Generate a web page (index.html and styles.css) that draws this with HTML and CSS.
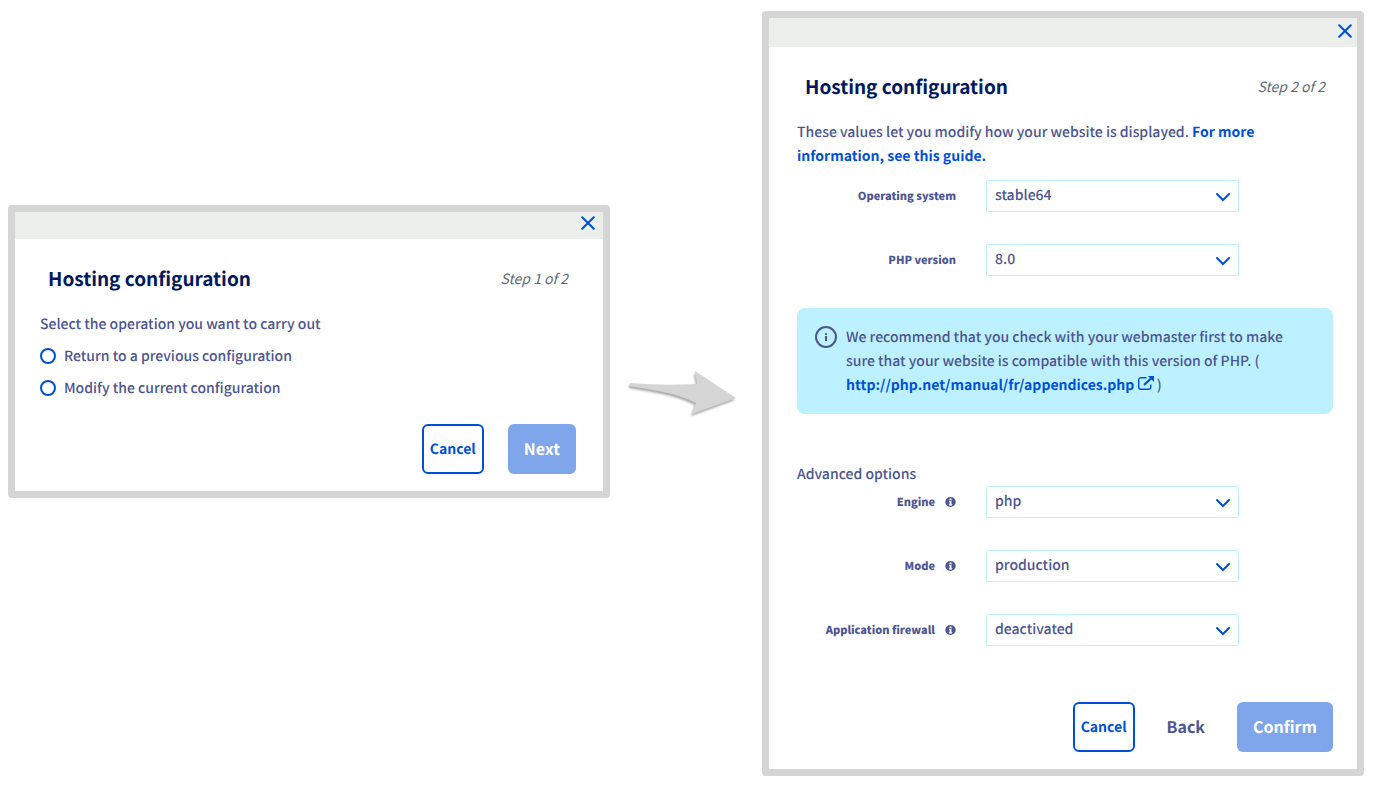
FILE: index.html
```html
<!DOCTYPE html>
<html lang="en">
  <head>
    <meta charset="utf-8">
    <meta name="viewport" content="width=device-width, initial-scale=1.0">
    <title>Hosting configuration</title>
    <link rel="stylesheet" href="styles.css">
  </head>

  <body>
    <main class="steps">
      <!-- Step 1 -->
      <section class="dialog dialog-first">
        <div class="dialog-bar">
          <button class="close" type="button" aria-label="Close">
            <svg width="14" height="14" viewBox="0 0 14 14"><path d="M1.2 1.2L12.8 12.8M12.8 1.2L1.2 12.8"/></svg>
          </button>
        </div>
        <form class="dialog-body">
          <div class="dialog-head">
            <h2>Hosting configuration</h2>
            <em>Step 1 of 2</em>
          </div>
          <p>Select the operation you want to carry out</p>
          <label class="radio"><input type="radio" name="operation" value="return">Return to a previous configuration</label>
          <label class="radio"><input type="radio" name="operation" value="modify">Modify the current configuration</label>
          <div class="actions">
            <button class="btn btn-outline" type="button">Cancel</button>
            <button class="btn btn-primary" type="button">Next</button>
          </div>
        </form>
      </section>

      <svg class="arrow" viewBox="0 0 110 48">
        <path d="M1 15C25 17 45 17 68 16L66 3L107 30L63 46L67 35C45 24 22 22 1 18Z"/>
      </svg>

      <!-- Step 2 -->
      <section class="dialog dialog-second">
        <div class="dialog-bar">
          <button class="close" type="button" aria-label="Close">
            <svg width="14" height="14" viewBox="0 0 14 14"><path d="M1.2 1.2L12.8 12.8M12.8 1.2L1.2 12.8"/></svg>
          </button>
        </div>
        <form class="dialog-body">
          <div class="dialog-head">
            <h2>Hosting configuration</h2>
            <em>Step 2 of 2</em>
          </div>
          <p class="intro">These values let you modify how your website is displayed. <a href="#">For more information, see this guide.</a></p>

          <div class="form-row">
            <label for="os">Operating system</label>
            <div class="select">
              <select id="os"><option>stable64</option></select>
              <svg width="16" height="10" viewBox="0 0 16 10"><path d="M2 2L8 8L14 2"/></svg>
            </div>
          </div>
          <div class="form-row">
            <label for="php">PHP version</label>
            <div class="select">
              <select id="php"><option>8.0</option></select>
              <svg width="16" height="10" viewBox="0 0 16 10"><path d="M2 2L8 8L14 2"/></svg>
            </div>
          </div>

          <div class="notice">
            <svg class="notice-icon" width="22" height="22" viewBox="0 0 22 22">
              <circle cx="11" cy="11" r="10"/>
              <path d="M10 7.2h2v1.8h-2zM10 10h2v5h-2z"/>
            </svg>
            <p>We recommend that you check with your webmaster first to make sure that your website is compatible with this version of PHP. ( <a href="http://php.net/manual/fr/appendices.php">http://php.net/manual/fr/appendices.php <svg class="external" width="16" height="14" viewBox="0 0 16 14"><path class="external-box" d="M8.5 1.7H3A2.3 2.3 0 0 0 .7 4V11A2.3 2.3 0 0 0 3 13.3H10.5A2.3 2.3 0 0 0 12.8 11V8.5"/><path class="external-line" d="M6 9L13.5 2"/><path d="M10 0H16V6Z"/></svg></a> )</p>
          </div>

          <p>Advanced options</p>
          <div class="form-row">
            <label for="engine">Engine
              <svg class="info" width="11" height="10" viewBox="0 0 11 10"><ellipse cx="5.5" cy="5" rx="5.2" ry="5"/><path d="M4.6 1.4h1.9v1.5H4.6zM3.9 3.8h2.6v3.5h.7v1.1H3.9V7.3h.7V4.9h-.7z"/></svg>
            </label>
            <div class="select">
              <select id="engine"><option>php</option></select>
              <svg width="16" height="10" viewBox="0 0 16 10"><path d="M2 2L8 8L14 2"/></svg>
            </div>
          </div>
          <div class="form-row">
            <label for="mode">Mode
              <svg class="info" width="11" height="10" viewBox="0 0 11 10"><ellipse cx="5.5" cy="5" rx="5.2" ry="5"/><path d="M4.6 1.4h1.9v1.5H4.6zM3.9 3.8h2.6v3.5h.7v1.1H3.9V7.3h.7V4.9h-.7z"/></svg>
            </label>
            <div class="select">
              <select id="mode"><option>production</option></select>
              <svg width="16" height="10" viewBox="0 0 16 10"><path d="M2 2L8 8L14 2"/></svg>
            </div>
          </div>
          <div class="form-row">
            <label for="firewall">Application firewall
              <svg class="info" width="11" height="10" viewBox="0 0 11 10"><ellipse cx="5.5" cy="5" rx="5.2" ry="5"/><path d="M4.6 1.4h1.9v1.5H4.6zM3.9 3.8h2.6v3.5h.7v1.1H3.9V7.3h.7V4.9h-.7z"/></svg>
            </label>
            <div class="select">
              <select id="firewall"><option>deactivated</option></select>
              <svg width="16" height="10" viewBox="0 0 16 10"><path d="M2 2L8 8L14 2"/></svg>
            </div>
          </div>

          <div class="actions">
            <button class="btn btn-outline" type="button">Cancel</button>
            <button class="btn btn-link" type="button">Back</button>
            <button class="btn btn-primary" type="button">Confirm</button>
          </div>
        </form>
      </section>
    </main>
  </body>
</html>
```

FILE: styles.css
```css
/* Reset / Global */
* {
  margin: 0;
  padding: 0;
  box-sizing: border-box;
}

body {
  font-family: "Noto Sans CJK SC", "Open Sans", sans-serif;
  font-size: 14px;
  font-weight: 500;
  line-height: 24px;
  text-rendering: geometricPrecision;
  color: #4d5592;
  background-color: #fff;
}

button,
select,
input {
  font-family: inherit;
  text-rendering: inherit;
}

a {
  color: #0050d7;
  font-weight: bold;
  text-decoration: none;
}

/* Two dialogs side by side with the arrow between them */
.steps {
  display: flex;
  align-items: center;
  padding: 11px 17px 24px 8px;
}

.arrow {
  flex: none;
  width: 110px;
  height: 48px;
  margin: 0 23px 4px 19px;
  fill: #d5d5d5;
  filter: drop-shadow(-1px 2px 1px rgba(0, 0, 0, 0.35));
}

/* Dialog */
.dialog {
  flex: 1;
  min-width: 0;
  border: 7px solid #d5d5d5;
  border-radius: 4px;
}
.dialog-first {
  margin-bottom: 84px;
}
.dialog-bar {
  display: flex;
  align-items: center;
  justify-content: flex-end;
  height: 27px;
  padding: 0 7px 5px;
  background-color: #ebeeeb;
}
.dialog-body {
  padding: 25px 27px 17px 25px;
}
.dialog-second .dialog-bar {
  height: 29px;
  padding: 0 4px 4px;
}
.dialog-second .dialog-body {
  padding: 25px 24px 17px 28px;
}
.dialog-head {
  display: flex;
  align-items: center;
  justify-content: space-between;
  padding: 0 8px;
  margin-bottom: 18px;
  line-height: 30px;
}
.dialog-head h2 {
  font-size: 19px;
  color: #00185e;
}
.dialog-head em {
  font-weight: 400;
  color: #5f6b75;
}

.close {
  display: flex;
  padding: 1px;
  border: none;
  background: none;
  cursor: pointer;
}
.close path,
.select path {
  fill: none;
  stroke: #0050d7;
  stroke-width: 2;
  stroke-linecap: round;
}

/* Radio buttons */
.radio {
  display: flex;
  align-items: center;
  gap: 8px;
  margin-top: 8px;
}
.radio input {
  appearance: none;
  width: 16px;
  height: 16px;
  border: 2px solid #0050d7;
  border-radius: 50%;
}
.radio input:checked {
  border-width: 5px;
}

/* Form rows */
.intro {
  margin-bottom: 12px;
}
.form-row {
  display: grid;
  grid-template-columns: 159fr 253fr 64fr;
  gap: 30px;
  align-items: center;
  margin-bottom: 32px;
}
.form-row label {
  display: flex;
  align-items: center;
  justify-content: flex-end;
  gap: 10px;
  font-size: 11px;
  font-weight: 900;
  white-space: nowrap;
}
.info {
  fill: #4d5592;
}
.info path {
  fill: #fff;
}
.select {
  position: relative;
}
.select select {
  display: block;
  appearance: none;
  width: 100%;
  height: 32px;
  padding: 0 32px 2px 8px;
  border: 1px solid #bef1ff;
  border-radius: 1px;
  background-color: #fff;
  color: #4d5592;
  font-size: 14px;
  font-weight: 500;
}
.select svg {
  position: absolute;
  top: 12px;
  right: 8px;
  pointer-events: none;
}

/* Notice */
.notice {
  display: flex;
  gap: 9px;
  padding: 17px 36px 17px 18px;
  margin-bottom: 48px;
  border-radius: 8px;
  background-color: #bef1ff;
}
.notice-icon {
  flex: none;
  margin-top: 1px;
}
.notice-icon circle {
  fill: none;
  stroke: #4d5592;
  stroke-width: 2;
}
.notice-icon path {
  fill: #4d5592;
}
.external {
  fill: #0050d7;
}
.external-box,
.external-line {
  fill: none;
  stroke: #0050d7;
  stroke-width: 1.4;
}
.external-line {
  stroke-width: 2.2;
}

/* Buttons */
.actions {
  display: flex;
  justify-content: flex-end;
  gap: 24px;
  margin-top: 24px;
}
.dialog-second .actions {
  margin-top: 56px;
}
.btn {
  height: 50px;
  padding: 0 16px 2px;
  border: none;
  border-radius: 6px;
  font-size: 16px;
  font-weight: bold;
  cursor: pointer;
}
.btn-outline {
  padding: 0 6px;
  border: 2px solid #0050d7;
  background-color: #fff;
  color: #0050d7;
  font-size: 14px;
}
.btn-link {
  padding: 0 8px 2px;
  background: none;
  color: #4d5592;
}
.btn-primary {
  background-color: #7fa6eb;
  color: #fff;
}
```
